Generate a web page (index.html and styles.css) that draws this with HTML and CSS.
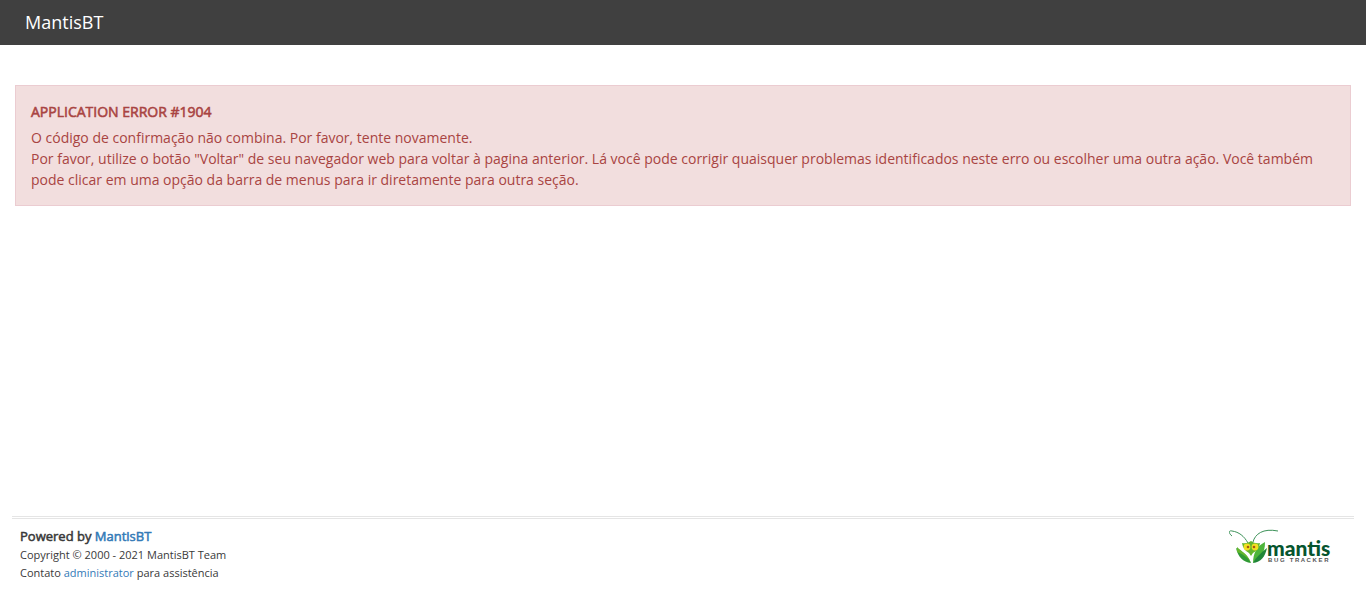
FILE: index.html
```html
<!DOCTYPE html>
<html lang="pt-BR">
<head>
<meta charset="utf-8">
<meta name="viewport" content="width=device-width, initial-scale=1">
<title>MantisBT</title>
<link rel="stylesheet" href="styles.css">
</head>
<body>
<header class="navbar"><a class="brand" href="#">MantisBT</a></header>
<main class="content">
  <section class="alert" role="alert">
    <p class="alert-title strong">APPLICATION ERROR #1904</p>
    <p>O código de confirmação não combina. Por favor, tente novamente.</p>
    <p>Por favor, utilize o botão "Voltar" de seu navegador web para voltar à pagina anterior. Lá você pode corrigir quaisquer problemas identificados neste erro ou escolher uma outra ação. Você também pode clicar em uma opção da barra de menus para ir diretamente para outra seção.</p>
  </section>
</main>
<footer class="footer">
  <div class="credits">
    <p class="powered strong">Powered by <a href="#">MantisBT</a></p>
    <p>Copyright © 2000 - 2021 MantisBT Team</p>
    <p>Contato <a href="#">administrator</a> para assistência</p>
  </div>
  <a class="logo" href="#" aria-label="Mantis Bug Tracker">
    <svg width="104" height="36" viewBox="0 0 104 36">
      <path d="M3 7C0 5 -1 1 3 2C10 3 15 7 19 14M24 13C26 5 34-1 49 2" fill="none" stroke="#3d9259" stroke-width="1"/>
      <path d="M7 19C10 21 18 24 22 34C14 33 9 28 7 19Z" fill="#2f9a35"/>
      <path d="M8 18C13 23 19 25 22 34C18 27 13 25 8 23Z" fill="#63b62d"/>
      <path d="M36 13C28 17 24 24 24 34L32 27C35 23 36 19 36 13Z" fill="#4db53a"/>
      <path d="M38 19C36 28 32 33 24 34C27 28 32 24 38 19Z" fill="#218638"/>
      <path d="M13 14Q18 15 22 12Q26 15 31 14Q30 21 24 24L22 27L20 24Q14 21 13 14Z" fill="#63b62d"/>
      <circle cx="18" cy="18" r="3.4" fill="#f1df22"/>
      <circle cx="26" cy="18" r="3.4" fill="#f1df22"/>
      <circle cx="19" cy="18" r="1.3" fill="#a65812"/><circle cx="25" cy="18" r="1.3" fill="#a65812"/>
      <text class="logo-name" x="38" y="27">mantis</text>
      <text class="logo-sub" x="39" y="33">B U G&#160;&#160; T R A C K E R</text>
    </svg>
  </a>
</footer>
</body>
</html>
```
FILE: styles.css
```css
* { box-sizing: border-box; }
body {
  margin: 0;
  min-height: 100vh;
  display: flex;
  flex-direction: column;
  background: #fff;
  color: #393939;
  font: 13px/18px "Open Sans", sans-serif;
}
p { margin: 0; }
a { color: #337ab7; text-decoration: none; }
.navbar { background: #404040; padding: 0 25px; }
.brand { color: #fff; font-size: 18px; line-height: 45px; }
.content { flex: 1; padding: 40px 15px; }
.alert {
  padding: 15px;
  border: 1px solid #ebccd1;
  background: #f2dede;
  color: #a94442;
  font-size: 14px;
  line-height: 21px;
}
.alert-title { margin-bottom: 5px; }
/* Thickened regular weight, keeps the regular letter widths */
.strong { -webkit-text-stroke: 0.04em currentColor; }
.strong a { -webkit-text-stroke-color: #337ab7; }
.footer {
  display: flex;
  justify-content: space-between;
  align-items: flex-start;
  margin: 0 12px;
  padding: 8px 21px 31px 8px;
  border-top: 3px double #e5e5e5;
}
.credits { font-size: 11px; }
.powered { margin-bottom: 1px; font-size: 13px; }
.logo { display: flex; padding-top: 2px; }
.logo-name { font: 900 21px "Lato", sans-serif; fill: #06552f; }
.logo-sub { font: 700 6px "Liberation Sans", sans-serif; fill: #555; }
```
